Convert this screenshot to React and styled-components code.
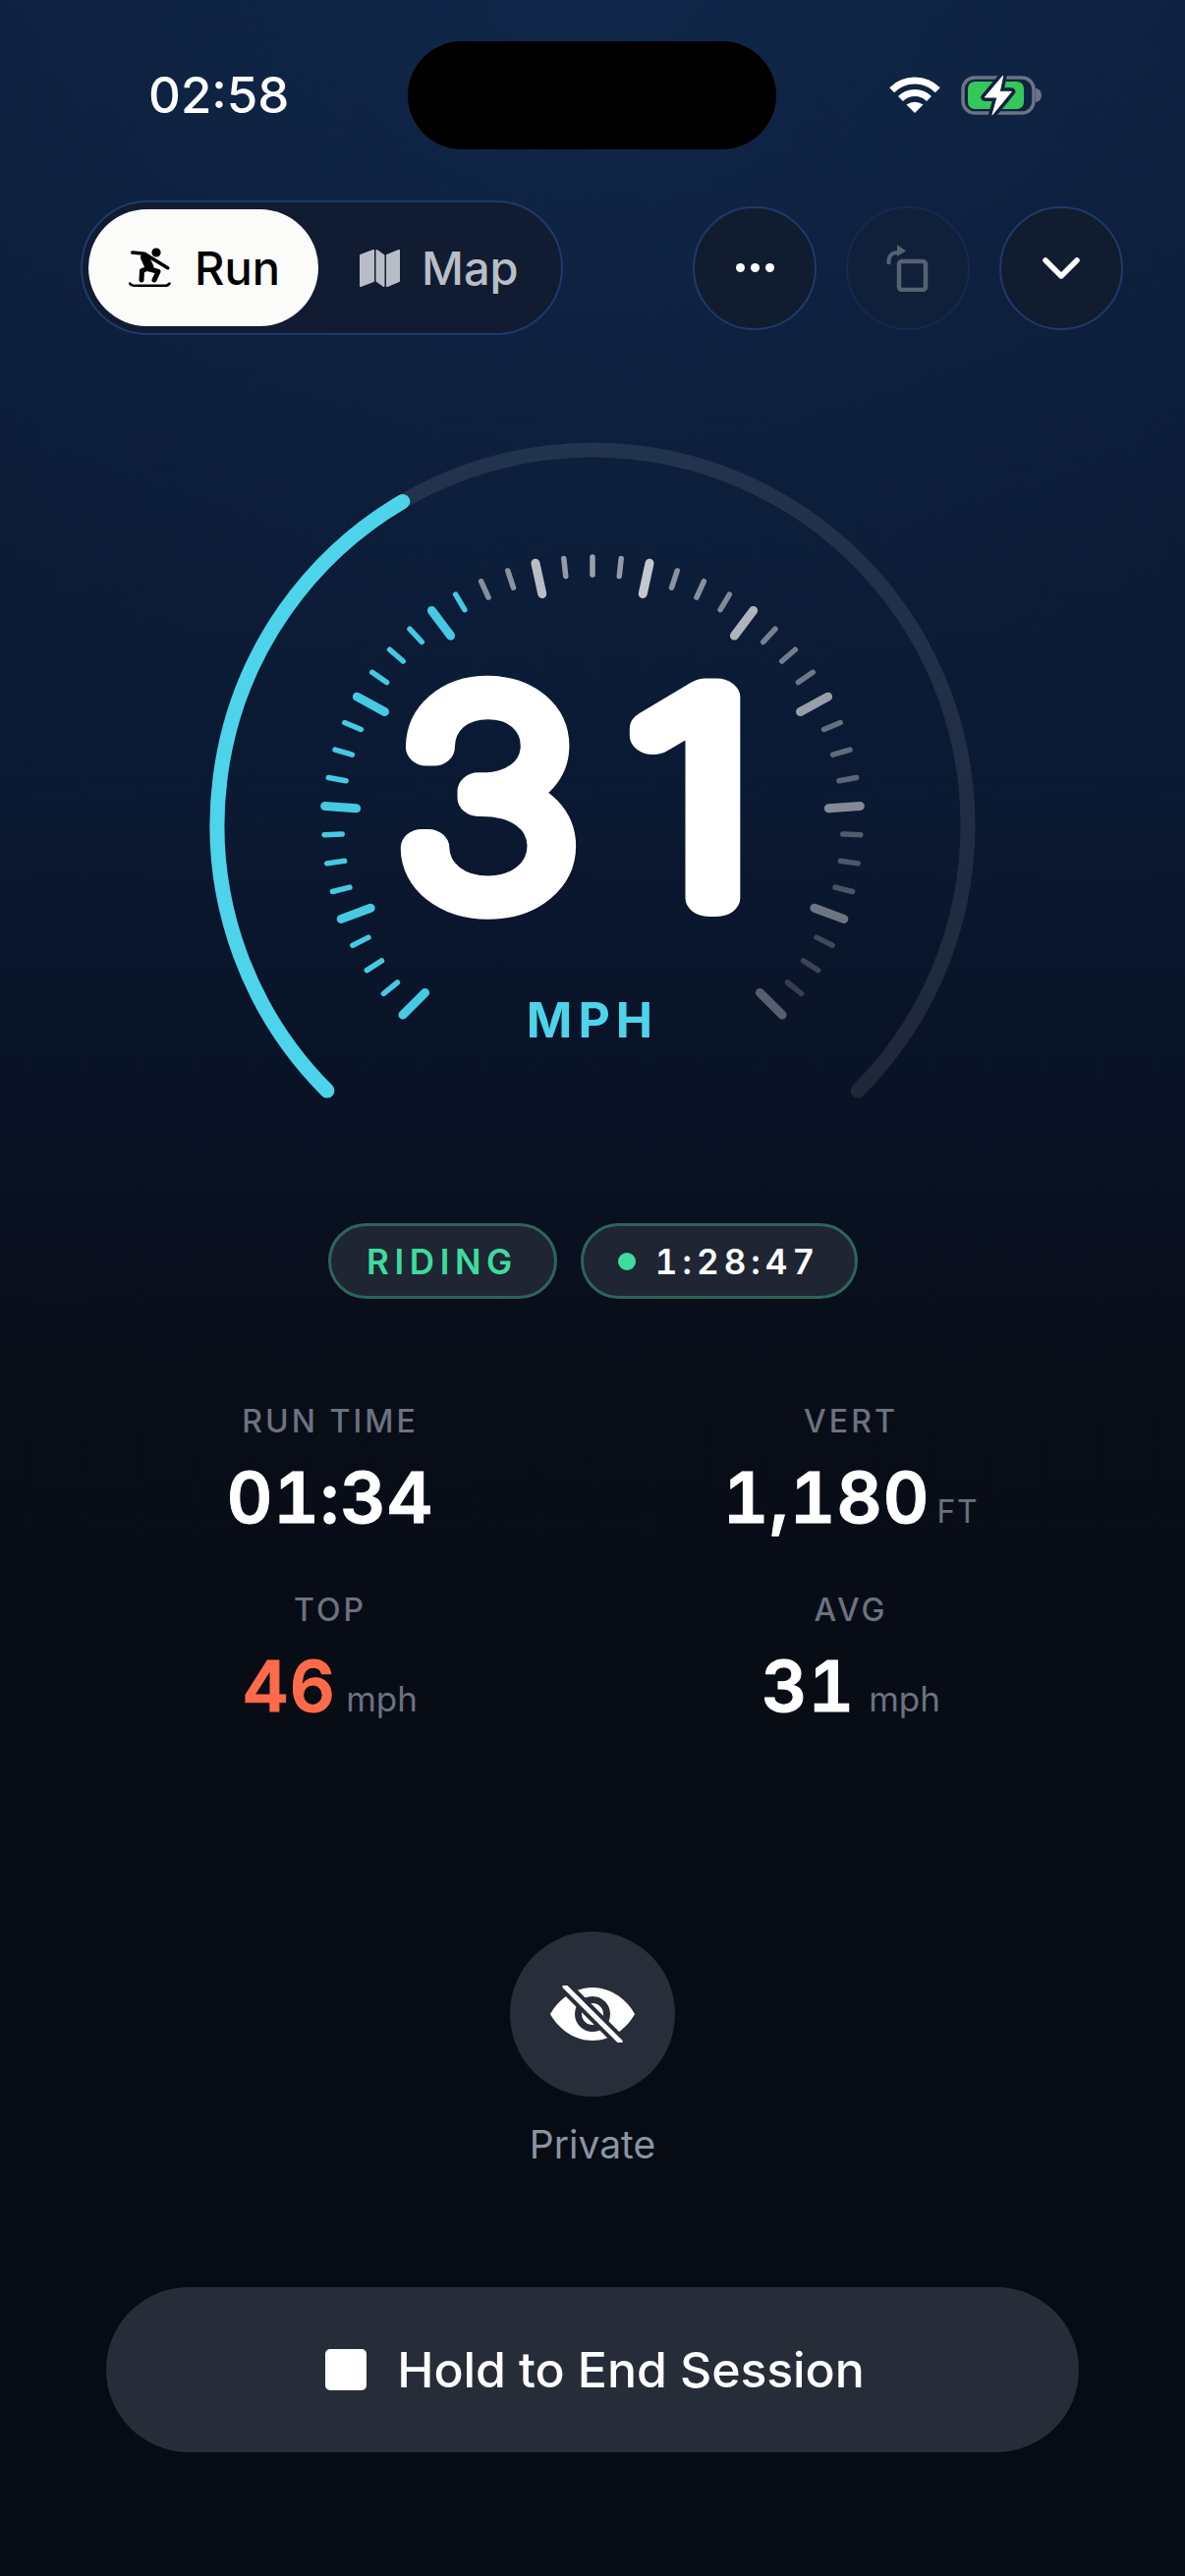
import React from 'react'
import styled, { createGlobalStyle } from 'styled-components'

const FONT = `Inter, "Noto Sans", "Liberation Sans", sans-serif`

const GlobalStyle = createGlobalStyle`
  html, body {
    margin: 0;
    padding: 0;
    background: #070b13;
  }
  * {
    box-sizing: border-box;
  }
`

const Screen = styled.div`
  width: 1206px;
  height: 2622px;
  overflow: hidden;
  display: flex;
  flex-direction: column;
  font-family: ${FONT};
  color: #fff;
  background:
    radial-gradient(ellipse 1000px 760px at 50% 0, rgba(22, 50, 92, 0.42), rgba(22, 50, 92, 0)),
    linear-gradient(180deg, #0d1e3b 0, #0b1a34 29%, #091225 43.5%, #090d18 53.4%, #070b13 74%, #070b13 100%);
`

const StatusBar = styled.div`
  display: grid;
  grid-template-columns: 415px 375px 416px;
  align-items: center;
  padding-top: 42px;
`

const Clock = styled.div`
  font-size: 51px;
  line-height: 110px;
  font-weight: 500;
  padding-left: 151px;
`

const Island = styled.div`
  height: 110px;
  background: #000;
  border-radius: 55px;
`

const StatusIcons = styled.div`
  display: flex;
  align-items: center;
  gap: 21px;
  padding-left: 115px;
`

const Toolbar = styled.div`
  display: flex;
  align-items: center;
  justify-content: space-between;
  margin-top: 52px;
  padding: 0 63px 0 82px;
`

const Segmented = styled.div`
  display: flex;
  align-items: center;
  height: 137px;
  padding: 0 6px;
  border-radius: 69px;
  background: #111c32;
  border: 2.5px solid #1e3a6c;
`

const Segment = styled.div`
  display: flex;
  align-items: center;
  gap: ${p => p.$gap}px;
  height: 119px;
  padding: 0 ${p => (p.$active ? 39 : 37)}px 0 ${p => p.$left}px;
  border-radius: 60px;
  font-size: 47px;
  font-weight: 500;
  color: ${p => (p.$active ? '#000' : '#b9bdc7')};
  background: ${p => (p.$active ? '#fbfbf9' : 'transparent')};
`

const Actions = styled.div`
  display: flex;
  gap: 30px;
`

const RoundButton = styled.div`
  width: 126px;
  height: 126px;
  border-radius: 50%;
  display: flex;
  align-items: center;
  justify-content: center;
  background: ${p => (p.$dim ? '#10203a' : '#111c31')};
  border: 2.5px solid ${p => (p.$dim ? '#162a4e' : '#1f3a6a')};
`

const Dots = styled.div`
  display: flex;
  gap: 6px;
  span {
    width: 9px;
    height: 9px;
    border-radius: 50%;
    background: #fff;
  }
`

const Gauge = styled.div`
  position: relative;
  width: 800px;
  height: 720px;
  margin: 99px auto 0;
  svg {
    display: block;
  }
`

const SpeedUnit = styled.div`
  position: absolute;
  left: 0;
  right: 0;
  top: 568px;
  text-align: center;
  font-size: 50px;
  line-height: 60px;
  font-weight: 700;
  letter-spacing: 6px;
  color: #4dd4ea;
`

const Pills = styled.div`
  display: flex;
  justify-content: center;
  gap: 24px;
  margin-top: 85px;
`

const Pill = styled.div`
  display: flex;
  align-items: center;
  justify-content: center;
  gap: 20px;
  width: ${p => p.$width}px;
  height: 77px;
  border-radius: 39px;
  background: #1f2533;
  border: 3px solid #2c6658;
  font-size: 35px;
  font-weight: 600;
  letter-spacing: ${p => p.$track}em;
  font-variant-numeric: tabular-nums;
  color: ${p => p.$color};
`

const LiveDot = styled.span`
  width: 18px;
  height: 18px;
  border-radius: 50%;
  background: #3ddc9e;
`

const Stats = styled.div`
  display: grid;
  grid-template-columns: 530px 530px;
  justify-content: center;
  row-gap: 58px;
  margin: 106px 4px 0 0;
`

const Stat = styled.div`
  display: flex;
  flex-direction: column;
  align-items: center;
  gap: 20px;
`

const StatLabel = styled.div`
  font-size: 32px;
  line-height: 38px;
  font-weight: 500;
  letter-spacing: 0.095em;
  color: #6b7280;
`

const StatValue = styled.div`
  display: flex;
  align-items: baseline;
  gap: ${p => p.$gap}px;
  height: 76px;
  font-size: 72px;
  line-height: 76px;
  font-weight: 600;
  letter-spacing: 1px;
  font-variant-numeric: tabular-nums;
  -webkit-text-stroke: 1px ${p => p.$color || '#fff'};
  color: ${p => p.$color || '#fff'};
`

const StatUnit = styled.span`
  font-size: ${p => p.$size}px;
  font-weight: 400;
  letter-spacing: ${p => p.$track || 0}em;
  -webkit-text-stroke: 0;
  color: #6b7280;
`

const PrivateToggle = styled.div`
  display: flex;
  flex-direction: column;
  align-items: center;
  gap: 26px;
  margin-top: 212px;
`

const PrivateCircle = styled.div`
  width: 168px;
  height: 168px;
  border-radius: 50%;
  display: flex;
  align-items: center;
  justify-content: center;
  background: #272e3a;
`

const PrivateLabel = styled.div`
  font-size: 39px;
  line-height: 46px;
  color: #8a94a3;
`

const EndButton = styled.div`
  display: flex;
  align-items: center;
  justify-content: center;
  gap: 31px;
  width: 990px;
  height: 168px;
  margin: 122px auto 0;
  padding-left: 5px;
  border-radius: 84px;
  background: #262d39;
  font-size: 50px;
  font-weight: 500;
  letter-spacing: -0.1px;
`

const StopSquare = styled.span`
  width: 42px;
  height: 42px;
  border-radius: 5px;
  background: #fff;
`

const CX = 400
const CY = 400
const START = -135
const SWEEP = 270
const SPEED = 31
const MAX = 80
const TICKS = 44

const point = (deg, r) => {
  const a = (deg * Math.PI) / 180
  return [CX + r * Math.sin(a), CY - r * Math.cos(a)]
}

const arc = (from, to, r) => {
  const [x1, y1] = point(from, r)
  const [x2, y2] = point(to, r)
  return `M${x1} ${y1} A${r} ${r} 0 ${to - from > 180 ? 1 : 0} 1 ${x2} ${y2}`
}

const tickOpacity = (i, major) => {
  if (major) return Math.max(0.3, 0.78 - Math.abs(i - 23) * 0.022)
  if (i < 22) return 0.5 + (i - 18) * 0.02
  return Math.max(0.16, 0.58 - (i - 22) * 0.019)
}

const digit = {
  fontFamily: 'Inter',
  fontWeight: 100,
  fontSize: 281,
  fill: '#fff',
  stroke: '#fff',
  strokeWidth: 38,
  strokeLinejoin: 'round',
  strokeLinecap: 'round',
  textAnchor: 'middle'
}

function Dial() {
  const end = START + (SPEED / MAX) * SWEEP
  const ticks = []
  for (let i = 0; i <= TICKS; i++) {
    const deg = START + (i / TICKS) * SWEEP
    const major = i % 4 === 0
    const [x1, y1] = point(deg, major ? 241 : 255)
    const [x2, y2] = point(deg, 273)
    const active = deg <= end
    ticks.push(
      <line
        key={i}
        x1={x1}
        y1={y1}
        x2={x2}
        y2={y2}
        stroke={active ? '#46c9e2' : '#fff'}
        strokeOpacity={active ? 1 : tickOpacity(i, major)}
        strokeWidth={major ? 9 : 5.5}
        strokeLinecap="round"
      />
    )
  }
  return (
    <svg width="800" height="720" viewBox="0 0 800 720" fill="none">
      <path d={arc(START, -START, 382)} stroke="#fff" strokeOpacity="0.09" strokeWidth="15" strokeLinecap="round" />
      <path d={arc(START, end, 382)} stroke="#4dd4ea" strokeWidth="15" strokeLinecap="round" />
      {ticks}
      <text transform="translate(293 474) scale(1.12 1)" style={digit}>3</text>
      <text transform="translate(501.5 474) scale(1.26 1)" style={digit}>1</text>
    </svg>
  )
}

const Wifi = () => (
  <svg width="52" height="38" viewBox="0 0 52 38" fill="none">
    <path d="M2.7 13.7 A33 33 0 0 1 49.3 13.7" stroke="#fff" strokeWidth="7" />
    <path d="M11.5 22.5 A20.5 20.5 0 0 1 40.5 22.5" stroke="#fff" strokeWidth="7" />
    <path d="M26 37 L17.5 28.5 Q26 23 34.5 28.5 Z" fill="#fff" />
  </svg>
)

const Battery = () => (
  <svg width="82" height="42" viewBox="0 0 82 42" fill="none">
    <rect x="2" y="3" width="72" height="36" rx="12" stroke="#6b7485" strokeWidth="3.5" />
    <rect x="7" y="7" width="57" height="28" rx="7" fill="#34c759" />
    <path d="M76 14 a6 7 0 0 1 0 14 Z" fill="#6b7485" />
    <path d="M42.7 1.3 L24.3 23 H37 L32 40.7 L51.3 17.3 H39.3 Z" fill="#fff" stroke="#10223f" strokeWidth="8" strokeLinejoin="round" />
    <path d="M42.7 1.3 L24.3 23 H37 L32 40.7 L51.3 17.3 H39.3 Z" fill="#fff" stroke="#fff" strokeWidth="1" strokeLinejoin="round" />
  </svg>
)

const SnowboardIcon = () => (
  <svg width="43" height="41" viewBox="0 0 43 41" fill="none" stroke="#000" strokeLinecap="round" strokeLinejoin="round">
    <circle cx="28" cy="5" r="4.6" fill="#000" stroke="none" />
    <path d="M3.7 5 L16 6.3 L39.7 20.7" strokeWidth="3.6" />
    <path d="M16.5 10 L21 20" strokeWidth="9" />
    <path d="M20 21 L13.5 23.5 L13 33" strokeWidth="5" />
    <path d="M22 22 L30 24.5 L26 33" strokeWidth="5" />
    <path d="M1 36.5 Q2.5 38.8 5 38.8 H37 Q40 38.8 41.5 36.5" strokeWidth="2.6" />
  </svg>
)

const MapIcon = () => (
  <svg width="41" height="38" viewBox="0 0 41 38" fill="#b9bdc7" stroke="#b9bdc7" strokeWidth="2" strokeLinejoin="round">
    <path d="M1 6 L14 1 V32 L1 37 Z" />
    <path d="M17.5 1 L24.5 6 V37 L17.5 32 Z" />
    <path d="M28 6 L40 1 V32 L28 37 Z" />
  </svg>
)

const RotateIcon = () => (
  <svg width="44" height="48" viewBox="0 0 44 48" fill="none" stroke="#566273">
    <rect x="13" y="17" width="27" height="29" rx="3" strokeWidth="4.5" />
    <path d="M2.5 20 V16 a8 8 0 0 1 8 -8 h3" strokeWidth="4" />
    <path d="M11 0 L20 6.5 L11 12 Z" fill="#566273" stroke="none" />
  </svg>
)

const Chevron = () => (
  <svg width="40" height="24" viewBox="0 0 40 24" fill="none" stroke="#fff" strokeWidth="5.5" strokeLinecap="round" strokeLinejoin="round">
    <path d="M4 4 L20 20 L36 4" />
  </svg>
)

const EyeOff = () => (
  <svg width="88" height="58" viewBox="0 0 88 58" fill="none">
    <path d="M1 29 C10 13 26 2 44 2 S78 13 87 29 C78 45 62 56 44 56 S10 45 1 29 Z" fill="#fff" />
    <circle cx="44" cy="29" r="14.5" fill="#fff" stroke="#272e3a" strokeWidth="7" />
    <path d="M16 1 L72 57" stroke="#272e3a" strokeWidth="13" />
    <path d="M16 1 L72 57" stroke="#fff" strokeWidth="5" strokeLinecap="round" />
  </svg>
)

export default function App() {
  return (
    <Screen>
      <GlobalStyle />
      <StatusBar>
        <Clock>02:58</Clock>
        <Island />
        <StatusIcons>
          <Wifi />
          <Battery />
        </StatusIcons>
      </StatusBar>

      <Toolbar>
        <Segmented>
          <Segment $active $left={41} $gap={24}>
            <SnowboardIcon />
            Run
          </Segment>
          <Segment $left={42} $gap={22}>
            <MapIcon />
            Map
          </Segment>
        </Segmented>
        <Actions>
          <RoundButton>
            <Dots>
              <span />
              <span />
              <span />
            </Dots>
          </RoundButton>
          <RoundButton $dim>
            <RotateIcon />
          </RoundButton>
          <RoundButton>
            <Chevron />
          </RoundButton>
        </Actions>
      </Toolbar>

      <Gauge>
        <Dial />
        <SpeedUnit>MPH</SpeedUnit>
      </Gauge>

      <Pills>
        <Pill $width={233} $color="#3ddc9e" $track={0.16}>RIDING</Pill>
        <Pill $width={282} $color="#fff" $track={0.145}>
          <LiveDot />
          1:28:47
        </Pill>
      </Pills>

      <Stats>
        <Stat>
          <StatLabel>RUN TIME</StatLabel>
          <StatValue>01:34</StatValue>
        </Stat>
        <Stat>
          <StatLabel>VERT</StatLabel>
          <StatValue $gap={7}>
            1,180
            <StatUnit $size={32} $track={0.05}>FT</StatUnit>
          </StatValue>
        </Stat>
        <Stat>
          <StatLabel>TOP</StatLabel>
          <StatValue $gap={10} $color="#ff6b4a">
            46
            <StatUnit $size={35}>mph</StatUnit>
          </StatValue>
        </Stat>
        <Stat>
          <StatLabel>AVG</StatLabel>
          <StatValue $gap={14}>
            31
            <StatUnit $size={35}>mph</StatUnit>
          </StatValue>
        </Stat>
      </Stats>

      <PrivateToggle>
        <PrivateCircle>
          <EyeOff />
        </PrivateCircle>
        <PrivateLabel>Private</PrivateLabel>
      </PrivateToggle>

      <EndButton>
        <StopSquare />
        Hold to End Session
      </EndButton>
    </Screen>
  )
}
